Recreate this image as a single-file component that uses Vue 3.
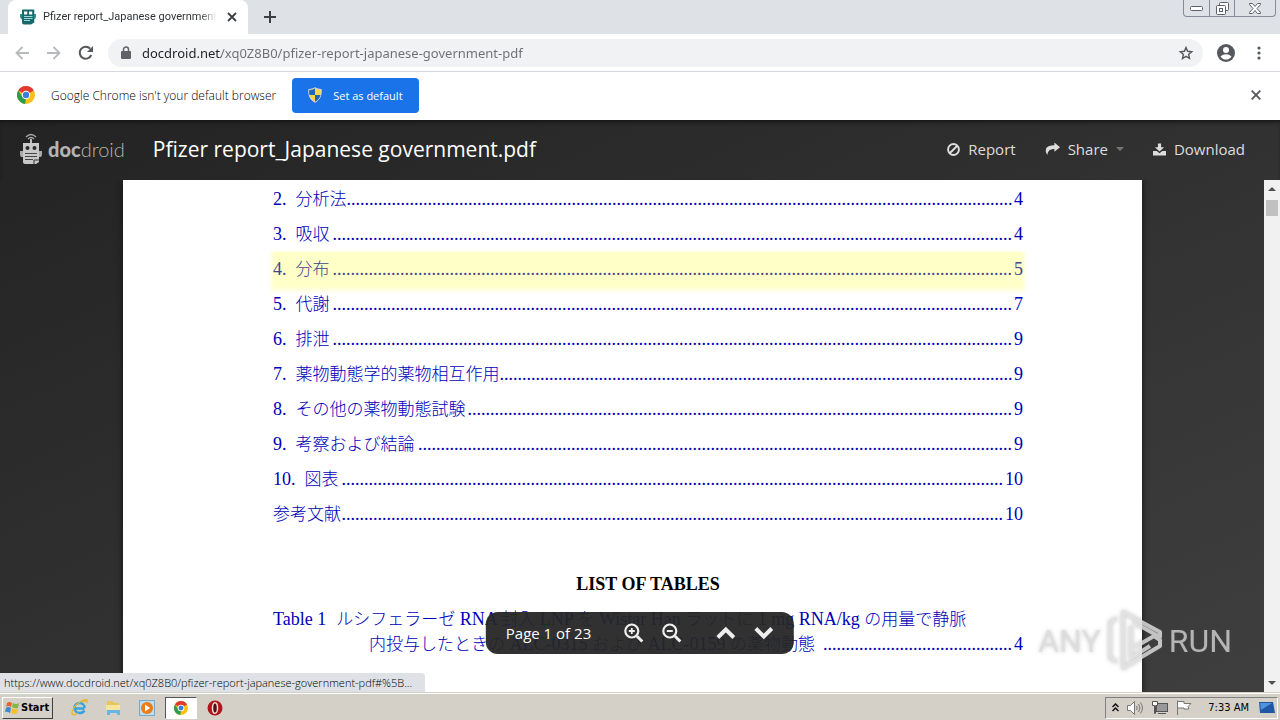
<script setup>
import { nextTick, onBeforeUnmount, onMounted, ref } from 'vue'

const address = ref('docdroid.net/xq0Z8B0/pfizer-report-japanese-government-pdf')

const contents = [
  { num: '2.', title: '分析法', page: 4 },
  { num: '3.', title: '吸収', page: 4 },
  { num: '4.', title: '分布', page: 5, active: true },
  { num: '5.', title: '代謝', page: 7 },
  { num: '6.', title: '排泄', page: 9 },
  { num: '7.', title: '薬物動態学的薬物相互作用', page: 9 },
  { num: '8.', title: 'その他の薬物動態試験', page: 9 },
  { num: '9.', title: '考察および結論', page: 9 },
  { num: '10.', title: '図表', page: 10 },
  { num: '', title: '参考文献', page: 10 },
]

// Dot leaders fill whatever width is left between a title and its page number.
const sheet = ref(null)
const leaders = ref([])
const DOTS_PER_PIXEL = 2 / 9

function fitLeaders() {
  leaders.value = [...sheet.value.querySelectorAll('.dots')].map((el) =>
    '.'.repeat(Math.max(0, Math.floor(el.clientWidth * DOTS_PER_PIXEL))),
  )
}

onMounted(() => {
  nextTick(fitLeaders)
  window.addEventListener('resize', fitLeaders)
})
onBeforeUnmount(() => window.removeEventListener('resize', fitLeaders))
</script>

<template>
  <div class="screen">
    <header class="tabstrip">
      <div class="tab">
        <svg class="favicon" width="16" height="16" viewBox="0 0 16 16" aria-hidden="true">
          <path d="M2.500.5h11q.8 0 .8 1v12L11 15.500H4q-2 0-2-2V1.500q0-1 .5-1z" fill="#17696c" />
          <path d="M0 5h2v5H1L0 8zM14 5h2v3l-1 2h-1z" fill="#2f8d8d" />
          <path d="M4 2.500h3.200v3H4zM9 2.500h3.200v3H9z" fill="#fff" />
          <path d="M4 7.500h8.500M4 9.500h8.500M4 11.500h6" stroke="#9ddad6" />
        </svg>
        <span class="tab-title">Pfizer report_Japanese government.pdf</span>
        <button class="plain tab-close" aria-label="Close tab">
          <svg width="10" height="10" viewBox="0 0 10 10"><path d="M1 1l8 8M9 1l-8 8" stroke="#3c4043" stroke-width="1.800" /></svg>
        </button>
      </div>
      <button class="plain new-tab" aria-label="New tab">
        <svg width="12" height="12" viewBox="0 0 12 12"><path d="M6 0v12M0 6h12" stroke="#3c4043" stroke-width="2" /></svg>
      </button>
      <div class="window-buttons">
        <button class="plain" aria-label="Minimize">
          <svg width="13" height="5" viewBox="0 0 13 5"><rect x=".5" y=".5" width="12" height="4" rx="1" fill="#fff" stroke="#5b606b" /></svg>
        </button>
        <button class="plain" aria-label="Restore">
          <svg width="13" height="13" viewBox="0 0 13 13" fill="#fff" stroke="#5b606b"><rect x="3.500" y=".5" width="9" height="8" rx="1" /><rect x=".5" y="3.500" width="9" height="9" rx="1" /><rect x="3.500" y="6.500" width="3" height="3" /></svg>
        </button>
        <button class="plain wide" aria-label="Close window">
          <svg width="12" height="11" viewBox="0 0 12 11"><path d="M.5.5h3L6 3.500 8.500.5h3v1l-3.500 4 3.500 4v1h-3L6 7.500 3.500 10.500h-3v-1L4 5.500.5 1.500z" fill="#fff" stroke="#5b606b" /></svg>
        </button>
      </div>
    </header>

    <nav class="toolbar" aria-label="Browser toolbar">
      <button class="plain nav-btn" aria-label="Back">
        <svg width="14" height="14" viewBox="0 0 14 14" fill="none" stroke="#b8babd" stroke-width="1.800"><path d="M14 7H1.500M7.500 1L1.500 7l6 6" /></svg>
      </button>
      <button class="plain nav-btn" aria-label="Forward">
        <svg width="14" height="14" viewBox="0 0 14 14" fill="none" stroke="#b8babd" stroke-width="1.800"><path d="M0 7h12.500M6.500 1l6 6-6 6" /></svg>
      </button>
      <button class="plain nav-btn" aria-label="Reload">
        <svg width="16" height="16" viewBox="0 0 16 16"><path d="M13.300 10A6 6 0 1 1 12.200 3.700" fill="none" stroke="#55585c" stroke-width="2" /><path d="M15 1v6H9z" fill="#55585c" /></svg>
      </button>
      <div class="omnibox">
        <svg width="10" height="13" viewBox="0 0 10 13" aria-hidden="true"><rect y="5" width="10" height="8" rx="1" fill="#5f6368" /><path d="M2.500 6V3.500a2.500 2.500 0 0 1 5 0V6" fill="none" stroke="#5f6368" stroke-width="1.500" /></svg>
        <input v-model="address" class="address" type="text" aria-label="Address and search bar" />
        <button class="plain" aria-label="Bookmark this tab">
          <svg width="16" height="16" viewBox="0 0 16 16"><path d="M8 2.500l1.600 3.800 4.100.4-3.100 2.700.9 4L8 11.400l-3.500 2.100.9-4L2.300 6.700l4.100-.4z" fill="none" stroke="#55585c" stroke-width="1.400" /></svg>
        </button>
      </div>
      <button class="plain profile" aria-label="Profile">
        <svg width="18" height="18" viewBox="0 0 18 18"><circle cx="9" cy="9" r="9" fill="#55585d" /><circle cx="9" cy="6" r="3" fill="#fff" /><path d="M3.500 12.500Q5.500 10.200 9 10.200t5.500 2.300Q12.500 15.600 9 15.600t-5.500-3.100z" fill="#fff" /></svg>
      </button>
      <button class="plain menu" aria-label="Menu">
        <svg width="4" height="14" viewBox="0 0 4 14" fill="#55585d"><circle cx="2" cy="2" r="1.600" /><circle cx="2" cy="7" r="1.600" /><circle cx="2" cy="12" r="1.600" /></svg>
      </button>
    </nav>

    <section class="infobar">
      <svg width="18" height="18" viewBox="0 0 18 18" aria-hidden="true">
        <circle cx="9" cy="9" r="9" fill="#fbc116" />
        <path d="M9 9L1.200 4.500A9 9 0 0 1 16.800 4.500z" fill="#df3b30" />
        <path d="M1.200 4.500L5.500 11 9 13 8 18A9 9 0 0 1 1.200 4.500z" fill="#2e9c4b" />
        <circle cx="9" cy="9" r="4.200" fill="#fff" /><circle cx="9" cy="9" r="3.200" fill="#3e7de0" />
      </svg>
      <span class="info-text">Google Chrome isn't your default browser</span>
      <button class="default-btn">
        <svg width="14" height="16" viewBox="0 0 14 16" aria-hidden="true"><path d="M7 .7Q10 2.500 13.200 2.500C13.500 9 11.500 13 7 15.300 2.500 13 .5 9 .8 2.500 4 2.500 7 .7 7 .7z" fill="#f7d64a" stroke="#d8dde4" /><path d="M7 1.500V8H1.500q-.5-2-.3-5Q4.500 3 7 1.500zM7 8h5.500Q11.500 12.500 7 14.700z" fill="#2765b2" /></svg>
        <span>Set as default</span>
      </button>
      <button class="plain info-close" aria-label="Dismiss">
        <svg width="10" height="10" viewBox="0 0 10 10"><path d="M.7.7l8.600 8.600M9.300.7L.7 9.300" stroke="#55585c" stroke-width="1.900" /></svg>
      </button>
    </section>

    <main class="viewer">
      <header class="viewer-head">
        <a class="brand" href="#" aria-label="docdroid">
          <svg width="22" height="32" viewBox="0 0 22 32" aria-hidden="true">
            <path d="M6 4q5-5 10 0M8 6q3-3 6 0" fill="none" stroke="#aaa" stroke-width="1.300" /><path d="M10 6h2v5h-2z" fill="#bbb" />
            <path d="M3 10h16v19l-3 2H5q-2 0-2-2z" fill="#c9c9c9" /><path d="M0 18h3v6H1l-1-2zM19 18h3v4l-1 2h-2z" fill="#aaa" />
            <circle cx="7.500" cy="15" r="2" fill="#292929" /><circle cx="14.500" cy="15" r="2" fill="#292929" />
            <path d="M5 20.500h12M5 23.500h12M5 26.500h8" stroke="#454545" stroke-width="1.200" /><path d="M14 31v-4h5" fill="none" stroke="#333" />
          </svg>
          <span class="brand-name"><b>doc</b>droid</span>
        </a>
        <h1>Pfizer report_Japanese government.pdf</h1>
        <button class="plain action">
          <svg width="13" height="13" viewBox="0 0 12 12" fill="none" stroke="#ddd" stroke-width="1.800"><circle cx="6" cy="6" r="5" /><path d="M2.500 9.500l7-7" /></svg>
          Report
        </button>
        <button class="plain action">
          <svg width="15" height="14" viewBox="0 0 16 14"><path d="M10 0l6 5-6 5V7Q3 6.500 2.500 13.500 0 10 1 6.800 2.500 3 10 3z" fill="#ddd" /></svg>
          Share
          <svg width="8" height="4" viewBox="0 0 8 4"><path d="M0 0h8L4 4z" fill="#777" /></svg>
        </button>
        <button class="plain action">
          <svg width="13" height="13" viewBox="0 0 14 13" fill="#ddd"><path d="M5.300 0h3.400v4H12L7 8.700 2 4h3.300z" /><path d="M0 8h4l3 2.500L10 8h4v5H0z" /></svg>
          Download
        </button>
      </header>

      <div class="scroller">
        <div class="stage">
          <article ref="sheet" class="sheet" lang="ja">
            <a v-for="(row, i) in contents" :key="row.title" href="#" class="toc" :class="{ active: row.active }">
              <span v-if="row.num" class="num">{{ row.num }}</span>
              <span class="cjk">{{ row.title }}</span>
              <span class="dots" aria-hidden="true">{{ leaders[i] }}</span>
              <span>{{ row.page }}</span>
            </a>
            <h2>LIST OF TABLES</h2>
            <a href="#" class="table-link">
              <span class="table-line"><span>Table 1</span><span class="table-title"><span class="cjk">ルシフェラーゼ</span> RNA <span class="cjk">封入</span> LNP <span class="cjk">を</span> Wistar Han <span class="cjk">ラットに</span> 1 mg RNA/kg <span class="cjk">の用量で静脈</span></span></span>
              <span class="table-line second"><span><span class="cjk">内投与したときの</span> ALC-0315 <span class="cjk">および</span> ALC-0159 <span class="cjk">の薬物動態</span>&nbsp;</span><span class="dots" aria-hidden="true">{{ leaders[contents.length] }}</span><span>4</span></span>
            </a>
          </article>
        </div>
        <div class="scrollbar" aria-hidden="true">
          <svg width="8" height="4" viewBox="0 0 8 4"><path d="M0 4h8L4 0z" fill="#505050" /></svg>
          <div class="thumb"></div>
          <svg width="8" height="4" viewBox="0 0 8 4"><path d="M0 0h8L4 4z" fill="#505050" /></svg>
        </div>
      </div>

      <div class="pager">
        <span class="page-label">Page 1 of 23</span>
        <button class="plain" aria-label="Zoom in">
          <svg width="20" height="20" viewBox="0 0 20 20" fill="none" stroke="#eee"><circle cx="8" cy="8" r="6.500" stroke-width="2.200" /><path d="M13 13l5.500 5.500" stroke-width="3" /><path d="M8 5v6M5 8h6" stroke-width="1.800" /></svg>
        </button>
        <button class="plain" aria-label="Zoom out">
          <svg width="20" height="20" viewBox="0 0 20 20" fill="none" stroke="#eee"><circle cx="8" cy="8" r="6.500" stroke-width="2.200" /><path d="M13 13l5.500 5.500" stroke-width="3" /><path d="M5 8h6" stroke-width="1.800" /></svg>
        </button>
        <button class="plain up" aria-label="Previous page">
          <svg width="20" height="14" viewBox="0 0 20 14" fill="none" stroke="#eee" stroke-width="4"><path d="M2 11.500l8-8 8 8" /></svg>
        </button>
        <button class="plain" aria-label="Next page">
          <svg width="20" height="14" viewBox="0 0 20 14" fill="none" stroke="#eee" stroke-width="4"><path d="M2 2.500l8 8 8-8" /></svg>
        </button>
      </div>

      <div class="status">https://www.docdroid.net/xq0Z8B0/pfizer-report-japanese-government-pdf#%5B...</div>

      <div class="watermark">
        <span>ANY</span>
        <svg width="58" height="66" viewBox="0 0 58 66" fill="none" stroke="#e4e4e4" stroke-opacity=".8" stroke-linejoin="round" aria-hidden="true">
          <path d="M11 10L4 14v36l7 4" stroke-width="4" /><path d="M17 50V4l37 20v5L27 14M25 18v32l19-12M17 50v10l37-22v-6l-6-4-19 11" stroke-width="4" />
        </svg>
        <span>RUN</span>
      </div>
    </main>

    <footer class="taskbar">
      <button class="start">
        <svg width="16" height="16" viewBox="0 0 16 16" aria-hidden="true"><path d="M3 3q2-2 5 0L7 7Q4 5 2 7z" fill="#e8622c" /><path d="M9 3q3 2 6 0l-1 5q-3 1-6-1z" fill="#80b842" /><path d="M2 8q2-2 5 0l-1 5q-3-2-5-1z" fill="#3c88cc" /><path d="M8 8q3 2 6 1l-1 4q-3 2-6 0z" fill="#f5c02d" /></svg>
        Start
      </button>
      <div class="quick">
        <button class="plain" aria-label="Internet Explorer">
          <svg width="17" height="17" viewBox="0 0 17 17" fill="none"><path d="M13.500 9.500h-9M13.500 11.500Q12 14 8.500 14A5 5 0 1 1 13.500 9" stroke="#35a5dc" stroke-width="2.500" /><path d="M1 15Q1 8 9 3t7 0q-1-1.500-5 0M1 15q1 2 6-1" stroke="#e5b634" stroke-width="1.300" /></svg>
        </button>
        <button class="plain" aria-label="File Explorer">
          <svg width="17" height="17" viewBox="0 0 17 17"><path d="M2 2h6l1 2h5v10H2z" fill="#e8c65a" /><path d="M1 6h14v5H1z" fill="#f7e59a" /><path d="M2 16v-5h13v5h-3v-2H5v2z" fill="#66b7e4" /></svg>
        </button>
        <button class="plain" aria-label="Media Player">
          <svg width="16" height="16" viewBox="0 0 16 16"><rect x=".5" y=".5" width="15" height="15" fill="#bcdcf0" stroke="#78a8cc" /><circle cx="8" cy="8" r="6" fill="#ee7c16" /><path d="M6 4.500l5 3.500-5 3.500z" fill="#fff" /></svg>
        </button>
        <button class="plain running" aria-label="Chrome">
          <svg width="14" height="14" viewBox="0 0 18 18"><circle cx="9" cy="9" r="9" fill="#fbc116" /><path d="M9 9L1.200 4.500A9 9 0 0 1 16.800 4.500z" fill="#df3b30" /><path d="M1.200 4.500L5.500 11 9 13 8 18A9 9 0 0 1 1.200 4.500z" fill="#2e9c4b" /><circle cx="9" cy="9" r="4.200" fill="#fff" /><circle cx="9" cy="9" r="3.200" fill="#3e7de0" /></svg>
        </button>
        <button class="plain" aria-label="Opera">
          <svg width="16" height="16" viewBox="0 0 16 16"><circle cx="8" cy="8" r="7.500" fill="#b3141b" /><ellipse cx="8" cy="8" rx="2.500" ry="5.300" fill="#5b0c10" stroke="#f1dede" stroke-width="1.500" /></svg>
        </button>
      </div>
      <div class="tray">
        <svg width="7" height="9" viewBox="0 0 7 9" fill="none" stroke="#111" stroke-width="1.500" aria-hidden="true"><path d="M.5 4l3-3 3 3M.5 8l3-3 3 3" /></svg>
        <svg width="17" height="14" viewBox="0 0 17 14" fill="none" stroke="#777" aria-hidden="true"><path d="M.5 4.500h3l4-4v13l-4-4h-3z" fill="#fff" /><path d="M9.500 5q1.500 2 0 4M11.500 3q3 4 0 8M13.500 1.500q4 5.500 0 11" /></svg>
        <svg width="16" height="15" viewBox="0 0 16 15" stroke="#555" aria-hidden="true"><rect x="4.500" y="3.500" width="11" height="8" fill="#999" /><path d="M6 13.500h8" fill="none" /><path d="M.5 1.500h5v4h-2v8h-1v-8h-2z" fill="#fff" /></svg>
        <svg width="16" height="15" viewBox="0 0 16 15" fill="#fff" stroke="#777" aria-hidden="true"><path d="M1.500 15V.500M2 1.500h6v2h7l-3 3 1 2.500H8V8H2" /></svg>
        <time>7:33 AM</time>
        <svg width="16" height="13" viewBox="0 0 16 13" aria-hidden="true"><path d="M0 1h14l2 11H1z" fill="#2056a6" /><path d="M1 2h12L2 9z" fill="#4e92db" /></svg>
      </div>
    </footer>
  </div>
</template>

<style>
body { margin: 0; }
</style>

<style scoped>
.screen {
  display: flex;
  flex-direction: column;
  height: 100vh;
  overflow: hidden;
  background: #fff;
  font-family: "Open Sans", "Noto Sans", sans-serif;
  color: #303438;
}
.plain {
  display: flex;
  align-items: center;
  justify-content: center;
  padding: 0;
  border: 0;
  background: none;
  color: inherit;
  font: inherit;
}
a { text-decoration: none; color: inherit; }
svg { flex: none; display: block; }

.tabstrip { display: flex; flex: none; height: 34px; background: #dee1e6; }
.tab {
  display: flex;
  align-items: center;
  gap: 7px;
  width: 240px;
  box-sizing: border-box;
  margin-left: 8px;
  padding: 0 11px 0 12px;
  background: #fff;
  border-radius: 8px 8px 0 0;
}
.tab-title {
  flex: 1;
  min-width: 0;
  overflow: hidden;
  white-space: nowrap;
  font: 11px Roboto, sans-serif;
  line-height: 16px;
  mask-image: linear-gradient(to right, #000 90%, transparent);
}
.tab-close { margin-left: 3px; }
.new-tab { width: 44px; }
.window-buttons {
  display: flex;
  height: 16px;
  margin: 0 4px 0 auto;
  border: 1px solid #858b98;
  border-top: 0;
  border-radius: 0 0 4px 4px;
}
.window-buttons button { width: 25px; }
.window-buttons button + button { border-left: 1px solid #858b98; }
.window-buttons .wide { width: 41px; }

.toolbar {
  display: flex;
  flex: none;
  align-items: center;
  height: 37px;
  padding: 0 12px 0 6px;
  border-bottom: 1px solid #d5d8dc;
}
.nav-btn { width: 32px; height: 32px; }
.omnibox {
  display: flex;
  align-items: center;
  flex: 1;
  gap: 11px;
  height: 28px;
  margin-left: 6px;
  padding: 0 9px 0 13px;
  border-radius: 14px;
  background: #f0f2f4;
}
.address {
  flex: 1;
  min-width: 0;
  padding: 0;
  border: 0;
  outline: 0;
  font: 13px "Noto Sans", sans-serif;
  color: transparent;
  background: linear-gradient(to right, #202124 79px, #6b6f74 79px);
  background-clip: text;
}
.profile { width: 46px; }
.menu { width: 19px; }

.infobar { display: flex; flex: none; align-items: center; box-sizing: border-box; height: 48px; padding: 0 19px 2px 17px; }
.info-text { margin: 0 16px; font-size: 12px; font-weight: 300; white-space: nowrap; color: #000; }
.default-btn {
  display: flex;
  align-items: center;
  gap: 11px;
  height: 35px;
  padding: 0 16px;
  border: 0;
  border-radius: 4px;
  background: #1a73e8;
  color: #fff;
  font: 11px "Open Sans", sans-serif;
}
.info-close { margin-left: auto; }

.viewer {
  position: relative;
  display: flex;
  flex: 1;
  flex-direction: column;
  min-height: 0;
  background: linear-gradient(to bottom right, #232323, #3f3f3f);
}
.viewer-head {
  display: flex;
  flex: none;
  align-items: center;
  box-sizing: border-box;
  height: 60px;
  padding: 0 35px 2px 20px;
  box-shadow: inset 0 4px 4px -2px #151515;
  color: #ddd;
}
.brand { display: flex; align-items: center; gap: 6px; color: #b4b4b4; }
.brand-name { font: 300 20px Lato, sans-serif; }
.brand-name b { font-weight: 900; }
.viewer-head h1 { margin: 0 auto 0 28px; color: #fff; font-size: 21px; font-weight: 400; white-space: nowrap; }
.action { gap: 8px; margin-left: 29px; font-size: 15px; }

.scroller { display: flex; flex: 1; min-height: 0; }
.stage { display: flex; flex: 1; min-width: 0; padding: 0 122px 0 123px; overflow: hidden; }
.sheet {
  flex: 1;
  min-width: 0;
  box-sizing: border-box;
  padding: 2px 119px 0 150px;
  background: #fff;
  box-shadow: 0 0 6px #111;
  color: #0000b8;
  font: 18px "Liberation Serif", "Noto Sans CJK JP", serif;
}
.cjk { font: 300 17px "Noto Sans CJK JP", sans-serif; line-height: 1; white-space: nowrap; }
.toc { display: flex; align-items: baseline; height: 35px; line-height: 35px; }
.num { margin-right: 9px; }
.dots { flex: 1; min-width: 0; margin-right: 2px; text-align: right; white-space: nowrap; }
.toc.active { background: #ffffc8; box-shadow: 0 2px 4px 2px #ffffd4; color: #44448c; }
.sheet h2 { margin: 35px 0 0; color: #000; font-size: 18px; line-height: 35px; text-align: center; }
.table-link { display: block; padding-top: 5px; }
.table-line { display: flex; align-items: baseline; height: 25px; line-height: 25px; white-space: nowrap; }
.table-title { margin-left: 10px; }
.second { padding-left: 96px; }

.scrollbar {
  display: flex;
  flex: none;
  flex-direction: column;
  align-items: center;
  box-sizing: border-box;
  width: 16px;
  padding: 7px 0;
  background: #f1f1f1;
}
.thumb { width: 12px; height: 16px; margin: 9px 0 auto; background: #c1c1c1; }

.pager {
  position: absolute;
  bottom: 38px;
  left: 50%;
  display: flex;
  align-items: center;
  box-sizing: border-box;
  height: 42px;
  padding: 0 20px;
  border-radius: 12px;
  background: rgba(38, 38, 38, .95);
  color: #fff;
  font-size: 15px;
  transform: translateX(-50%);
}
.page-label { margin-right: 33px; white-space: nowrap; }
.pager button { margin-right: 18px; }
.pager button:last-child { margin-right: 0; }
.pager .up { margin-left: 16px; }

.status {
  position: absolute;
  bottom: 0;
  left: 0;
  height: 19px;
  padding: 0 13px 0 4px;
  border-radius: 0 4px 0 0;
  background: #dee1e6;
  color: #000;
  font-size: 11px;
  font-weight: 300;
  line-height: 19px;
  white-space: nowrap;
}
.watermark {
  position: absolute;
  right: 48px;
  bottom: 18px;
  display: flex;
  align-items: center;
  gap: 5px;
  color: rgba(220, 220, 220, .75);
  font: 32px Roboto, sans-serif;
  filter: drop-shadow(0 0 2px rgba(80, 80, 80, .4));
}

.taskbar {
  display: flex;
  flex: none;
  align-items: center;
  height: 28px;
  box-sizing: border-box;
  padding: 2px 2px 0;
  border-top: 1px solid #d4d0c8;
  background: #d4d0c8;
  box-shadow: inset 0 1px #fff;
  color: #000;
  font-family: "DejaVu Sans Condensed", "DejaVu Sans", sans-serif;
}
.start {
  display: flex;
  align-items: center;
  gap: 1px;
  height: 22px;
  padding: 0 3px 0 1px;
  border: 1px solid;
  border-color: #fff #404040 #404040 #fff;
  background: #d4d0c8;
  color: #000;
  font: bold 11px "DejaVu Sans Condensed", "DejaVu Sans", sans-serif;
}
.quick { display: flex; margin-left: 9px; }
.quick button { width: 34px; height: 22px; }
.quick .running { width: 32px; margin: 0 1px; border: 1px solid; border-color: #555 #fff #fff #555; background: #fff; box-sizing: border-box; }
.tray {
  display: flex;
  align-items: center;
  gap: 8px;
  height: 22px;
  box-sizing: border-box;
  margin-left: auto;
  padding: 0 2px 0 6px;
  border: 1px solid;
  border-color: #808080 #fff #fff #808080;
}
.tray time { margin: 0 2px 0 8px; font-size: 11px; }
</style>
